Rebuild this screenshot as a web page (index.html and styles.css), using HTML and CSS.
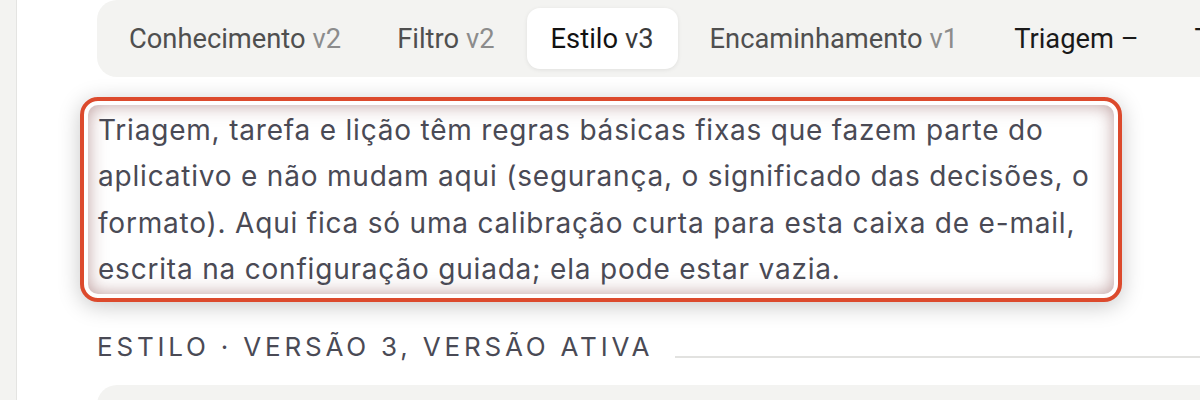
FILE: index.html
```html
<!DOCTYPE html>
<html lang="pt">
<head>
<meta charset="utf-8">
<title>Estilo v3</title>
<link rel="stylesheet" href="styles.css">
</head>
<body>
<div class="app">
  <aside class="rail"></aside>
  <main class="main">
    <nav class="tabs">
      <div class="tab">Conhecimento <span class="ver">v2</span></div>
      <div class="tab">Filtro <span class="ver">v2</span></div>
      <div class="tab active">Estilo <span class="ver">v3</span></div>
      <div class="tab">Encaminhamento <span class="ver">v1</span></div>
      <div class="tab strong">Triagem –</div>
      <div class="tab strong">Tarefa –</div>
      <div class="tab strong">Lição –</div>
    </nav>
    <div class="notice">
      <p class="notice-text">Triagem, tarefa e lição têm regras básicas fixas que fazem parte do aplicativo e não mudam aqui (segurança, o significado das decisões, o formato). Aqui fica só uma calibração curta para esta caixa de e-mail, escrita na configuração guiada; ela pode estar vazia.</p>
    </div>
    <div class="section-head">
      <h2 class="section-title">Estilo · versão 3, versão ativa</h2>
      <div class="section-rule"></div>
    </div>
    <div class="panel"></div>
  </main>
</div>
</body>
</html>
```

FILE: styles.css
```css
html, body {
  margin: 0;
  padding: 0;
  background: #ffffff;
  overflow: hidden;
}

.app {
  display: flex;
  width: 1200px;
  height: 400px;
  overflow: hidden;
}

.rail {
  flex: 0 0 16px;
  background: #f3f3f1;
  border-right: 1px solid #e4e4e2;
}

.main {
  flex: 1;
  min-width: 0;
  padding-left: 63px;
  overflow: hidden;
}

.tabs {
  display: flex;
  gap: 8px;
  padding: 8px;
  margin-left: 17px;
  width: 1300px;
  box-sizing: border-box;
  background: #f3f3f1;
  border-radius: 20px;
}

.tab {
  flex: 0 0 auto;
  display: flex;
  align-items: center;
  gap: 7px;
  height: 61px;
  padding: 0 24px;
  font-family: Roboto, "Liberation Sans", sans-serif;
  font-size: 27.3px;
  color: #4f4f4f;
  white-space: nowrap;
  border-radius: 13px;
}

.tab .ver {
  color: #8c8c8c;
}

.tab.active {
  background: #ffffff;
  color: #121212;
  box-shadow: 0 1px 4px rgba(0, 0, 0, 0.08);
}

.tab.active .ver {
  color: #3a3a3a;
}

.tab.strong {
  color: #1a1a1a;
}

.notice {
  margin-top: 20px;
  width: 1042px;
  box-sizing: border-box;
  border: 4px solid #dc4a2d;
  border-radius: 18px;
  padding: 4px;
  background: #ffffff;
  box-shadow: 0 4px 22px rgba(0, 0, 0, 0.22);
}

.notice-text {
  margin: 0;
  padding: 2px 10px 1px;
  border-radius: 10px;
  box-shadow: inset 0 0 18px rgba(125, 62, 62, 0.5);
  font-family: Inter, "Liberation Sans", sans-serif;
  font-size: 28px;
  line-height: 46.4px;
  letter-spacing: 0.8px;
  color: #4a4a55;
}

.section-head {
  display: flex;
  align-items: flex-start;
  gap: 22px;
  margin-top: 29px;
  margin-left: 17px;
}

.section-title {
  margin: 0;
  font-family: Inter, "Liberation Sans", sans-serif;
  font-weight: 400;
  font-size: 26px;
  line-height: 31px;
  letter-spacing: 3.8px;
  text-transform: uppercase;
  color: #4a4a55;
  white-space: nowrap;
}

.section-rule {
  flex: 1;
  height: 2px;
  margin-top: 25px;
  background: #e2e2e0;
}

.panel {
  margin-top: 23px;
  margin-left: 17px;
  width: 1200px;
  height: 120px;
  background: #f3f3f1;
  border-radius: 20px;
}
```
